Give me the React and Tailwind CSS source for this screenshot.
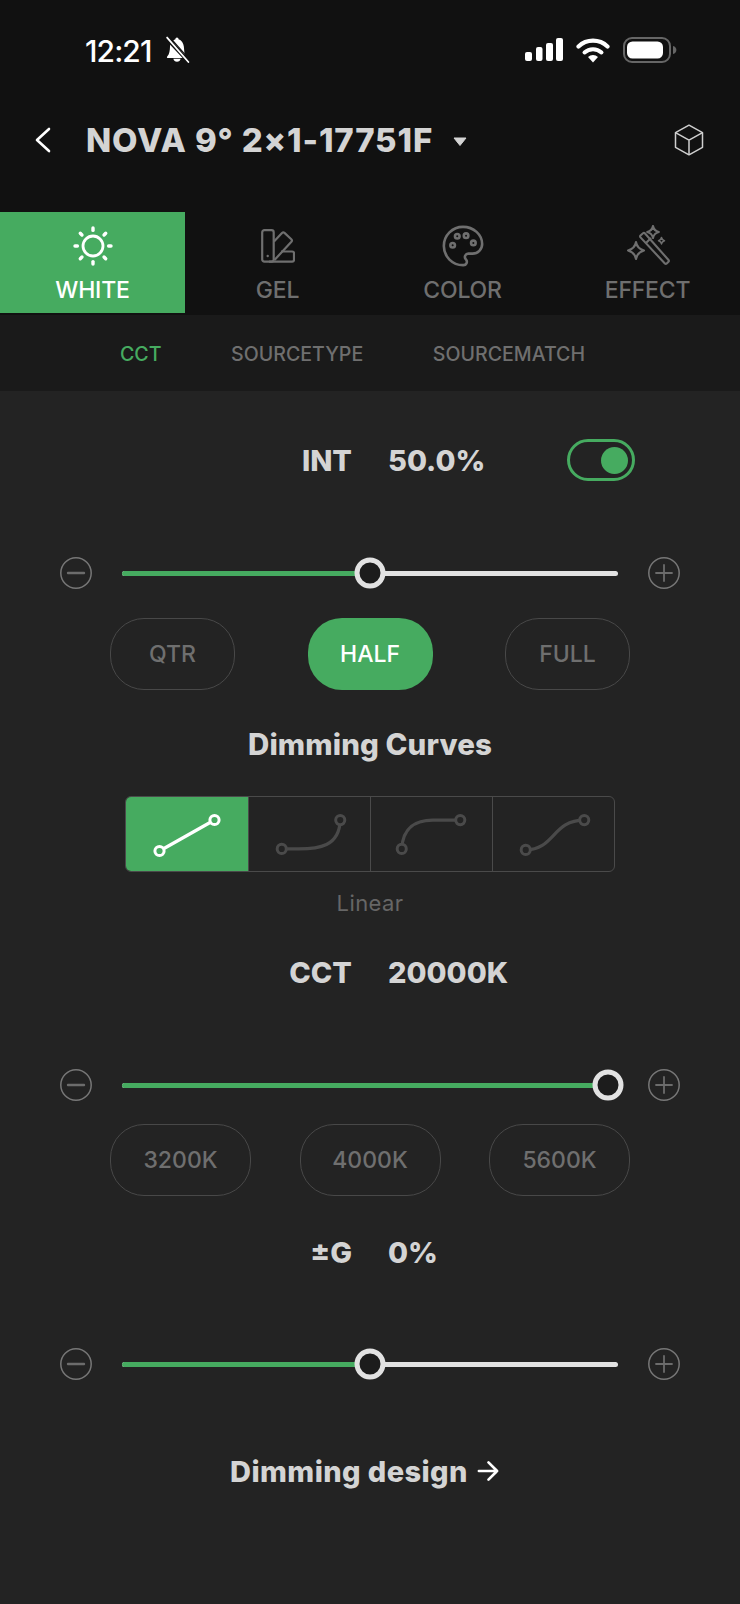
import React from "react";

const F = { fontFamily: "Inter, sans-serif" };

function BellSlash() {
  return (
    <svg width="27" height="27" viewBox="0 0 25 26" className="ml-[13px] mt-[-2px]">
      <path d="M12 1.500c-.9 0-1.500.7-1.500 1.600-1 .3-1.900.9-2.600 1.700L19.500 18c-.6-2.500-.6-5.300-.9-7.800-.3-3.300-2.200-6.200-5.100-7.100 0-.9-.6-1.600-1.500-1.600zM5.400 8.500c-.1.5-.1 1.200-.1 1.700-.2 3.800-.4 7.300-2.700 9.500-.6.6-.2 1.500.6 1.500h14.200z" fill="#fff" />
      <path d="M8.500 20.800a3.600 3.600 0 0 0 7 0z" fill="#fff" transform="translate(0 1.200)" />
      <path d="M2.500 1.500 23 25" stroke="#fff" strokeWidth="1.700" strokeLinecap="round" />
      <path d="M5 1 24 22.500" stroke="#111" strokeWidth="1.100" />
    </svg>
  );
}

function StatusIcons() {
  return (
    <div className="flex items-start">
      <svg width="38" height="24" viewBox="0 0 38 24">
        <rect x="0" y="14" width="7" height="9" rx="2" fill="#fff" />
        <rect x="11" y="9" width="6.500" height="14" rx="2" fill="#fff" />
        <rect x="21" y="5" width="7" height="18" rx="2" fill="#fff" />
        <rect x="31" y="0" width="7" height="23" rx="2" fill="#fff" />
      </svg>
      <svg width="34" height="26" viewBox="0 0 34 26" className="ml-[13px] mt-[-1px]">
        <path d="M2.500 9.500a21 21 0 0 1 29 0" fill="none" stroke="#fff" strokeWidth="4.200" strokeLinecap="round" />
        <path d="M8.500 15.500a12.500 12.500 0 0 1 17 0" fill="none" stroke="#fff" strokeWidth="4" strokeLinecap="round" />
        <path d="M17 25.500 12 20a7.400 7.400 0 0 1 10 0z" fill="#fff" />
      </svg>
      <svg width="54" height="26" viewBox="0 0 54 26" className="ml-[13px] mt-[-1px]">
        <rect x="1" y="1" width="46" height="24" rx="8" fill="none" stroke="#666" strokeWidth="2" />
        <rect x="4" y="4.500" width="36" height="17" rx="5.500" fill="#fff" />
        <path d="M50 9c2.200.5 3.400 2.200 3.400 4s-1.200 3.500-3.400 4z" fill="#666" />
      </svg>
    </div>
  );
}

function Sun() {
  const rays = [0, 45, 90, 135, 180, 225, 270, 315];
  return (
    <svg width="40" height="40" viewBox="0 0 40 40">
      <circle cx="20" cy="20" r="10" fill="none" stroke="#fff" strokeWidth="2.800" />
      {rays.map((a) => (
        <line key={a} x1="20" y1="2" x2="20" y2="4.400" stroke="#fff" strokeWidth="3.400" strokeLinecap="round" transform={`rotate(${a} 20 20)`} />
      ))}
    </svg>
  );
}

function Gel() {
  return (
    <svg width="34" height="34" viewBox="0 0 34 34" fill="none" stroke="#6f6f6f" strokeWidth="2.200" strokeLinejoin="round">
      <rect x="1.200" y="1.200" width="11.500" height="31.500" rx="2.200" />
      <circle cx="6.700" cy="27" r="1.200" fill="#6f6f6f" stroke="none" />
      <path d="M13 12.500 21 4c.8-.8 1.700-.8 2.500-.1l6.800 6.300c.8.8.8 1.700.1 2.500L13.500 31" />
      <path d="M20 22.500h11.300c1 0 1.700.7 1.700 1.700v6.600c0 1-.7 1.900-1.700 1.900H8" />
    </svg>
  );
}

function Palette() {
  return (
    <svg width="46" height="46" viewBox="0 0 24 24" fill="none" stroke="#6f6f6f" strokeWidth="1.350" strokeLinecap="round" strokeLinejoin="round">
      <path d="M12 22a1 1 0 0 1 0-20 10 9 0 0 1 10 9 5 5 0 0 1-5 5h-2.250a1.750 1.750 0 0 0-1.400 2.800l.3.4a1.750 1.750 0 0 1-1.400 2.800z" />
      <circle cx="13.600" cy="6.600" r="1.200" />
      <circle cx="17.400" cy="10.400" r="1.200" />
      <circle cx="6.600" cy="11.600" r="1.200" />
      <circle cx="9" cy="6.900" r="1.200" />
    </svg>
  );
}

function Wand() {
  return (
    <svg width="44" height="42" viewBox="0 0 44 42" fill="none" stroke="#6f6f6f" strokeWidth="2.100" strokeLinejoin="round">
      <path d="M14.500 10.500 17 8.200c.6-.5 1.300-.5 1.800 0L42.500 35c.5.6.5 1.200 0 1.700l-1.800 1.800c-.6.6-1.300.5-1.800 0L14.500 12.400c-.5-.6-.5-1.300 0-1.900z" />
      <path d="M20 18 25 13" />
      <path d="M10 17c.8 4.500 2.500 7 8 8.500-5.500 1.500-7.200 4-8 8.500-.8-4.500-2.500-7-8-8.500 5.500-1.500 7.200-4 8-8.500z" />
      <path d="M27 1c.6 3.200 2 5 5.800 6-3.800 1-5.200 2.800-5.800 6-.6-3.200-2-5-5.800-6 3.800-1 5.200-2.800 5.800-6z" />
      <path d="M35.500 12.500c.3 1.700 1 2.700 3 3.200-2 .5-2.700 1.500-3 3.200-.3-1.700-1-2.700-3-3.200 2-.5 2.700-1.500 3-3.200z" strokeWidth="1.500" />
    </svg>
  );
}

function Cube() {
  return (
    <svg width="30" height="32" viewBox="0 0 30 32" fill="none" stroke="#cfcfcf" strokeWidth="1.500" strokeLinejoin="round">
      <path d="M15 1.200 28.500 8.700v14.600L15 30.800 1.500 23.300V8.700z" />
      <path d="M1.500 8.700 15 16.200l13.500-7.500M15 16.200v14.600" />
    </svg>
  );
}

function Tab({ icon, label, active, iconBox }) {
  return (
    <div className={`flex flex-col items-center h-[101px] ${active ? "bg-[#46ab60]" : ""}`}>
      <div className="h-[63px] flex items-end justify-center">
        <div className={`${iconBox} flex items-center justify-center`}>{icon}</div>
      </div>
      <div className={`mt-[1px] text-[23px] leading-[28px] font-medium tracking-[-0.2px] ${active ? "text-white" : "text-[#6f6f6f]"}`}>{label}</div>
    </div>
  );
}

function Readout({ label, value, toggle }) {
  return (
    <div className="grid grid-cols-2 gap-x-[36px] h-[42px] items-center text-[#d4d4d4] text-[29px] font-extrabold leading-[42px]">
      <div className="text-right">{label}</div>
      <div className="flex items-center">
        <div className="w-[179px]">{value}</div>
        {toggle && (
          <div className="w-[68px] h-[42px] -translate-y-[1px] rounded-full border-[3px] border-[#46ab60] flex items-center justify-end pr-[4px]">
            <div className="w-[27px] h-[27px] rounded-full bg-[#46ab60]" />
          </div>
        )}
      </div>
    </div>
  );
}

function RoundBtn({ plus }) {
  return (
    <svg width="32" height="32" viewBox="0 0 32 32" fill="none" className="shrink-0">
      <circle cx="16" cy="16" r="15.200" stroke="#777" strokeWidth="1.500" />
      <line x1="8" y1="16" x2="24" y2="16" stroke="#6c6c6c" strokeWidth={plus ? 1.8 : 2.4} strokeLinecap="round" />
      {plus && <line x1="16" y1="8" x2="16" y2="24" stroke="#6c6c6c" strokeWidth="1.800" strokeLinecap="round" />}
    </svg>
  );
}

function Slider({ fill, knob }) {
  return (
    <div className="flex items-center pl-[60px]">
      <RoundBtn />
      <div className="relative ml-[30px] w-[496px] h-[5px] rounded-full bg-[#e2e2e2]">
        <div className={`h-full rounded-full bg-[#46ab60] ${fill}`} />
        <div className={`absolute top-1/2 -translate-x-1/2 -translate-y-1/2 w-[31px] h-[31px] rounded-full border-[5px] border-[#e2e2e2] bg-[#1c1c1c] ${knob}`} />
      </div>
      <div className="ml-[30px]">
        <RoundBtn plus />
      </div>
    </div>
  );
}

function Pill({ w, label, active }) {
  return (
    <div
      className={`${w} h-[72px] rounded-[34px] flex items-center justify-center text-[23px] font-medium ${
        active ? "bg-[#46ab60] text-white" : "border border-[#484848] text-[#6f6f6f]"
      }`}
    >
      {label}
    </div>
  );
}

function CurveIcon({ d, s, e, active }) {
  const c = active ? "#fff" : "#4a4a4a";
  const bg = active ? "#46ab60" : "#232323";
  return (
    <svg width="122" height="76" viewBox="0 0 122 76" fill="none">
      <path d={d} stroke={c} strokeWidth="3.200" strokeLinecap="round" />
      <circle cx={s[0]} cy={s[1]} r="4.600" stroke={c} strokeWidth="3" fill={bg} />
      <circle cx={e[0]} cy={e[1]} r="4.600" stroke={c} strokeWidth="3" fill={bg} />
    </svg>
  );
}

export default function App() {
  return (
    <div style={F} className="w-[740px] min-h-[1604px] bg-[#232323] flex flex-col">
      <div className="bg-[#111111] h-[315px] shrink-0">
        <div className="h-[100px] pt-[38px] pl-[85px] pr-[63px] flex justify-between items-start">
          <div className="flex items-start">
            <div className="text-white text-[30px] leading-[26px] font-medium tracking-[-0.9px]">12:21</div>
            <BellSlash />
          </div>
          <StatusIcons />
        </div>
        <div className="h-[80px] flex items-center pl-[34px] pr-[36px]">
          <svg width="17" height="26" viewBox="0 0 17 26" fill="none" stroke="#fff" strokeWidth="2.600" strokeLinecap="round" strokeLinejoin="round">
            <path d="M15 2 3 13l12 11" />
          </svg>
          <div className="ml-[35px] text-[#d4d4d4] text-[33px] font-extrabold leading-[40px] tracking-[0.85px] whitespace-nowrap">NOVA 9° 2×1-17751F</div>
          <svg width="14" height="9" viewBox="0 0 14 9" className="ml-[20px] mt-[2px]">
            <path d="M1 1h12L7 8.500z" fill="#d4d4d4" stroke="#d4d4d4" strokeLinejoin="round" />
          </svg>
          <div className="ml-auto">
            <Cube />
          </div>
        </div>
        <div className="mt-[32px] grid grid-cols-4">
          <Tab active icon={<Sun />} label="WHITE" iconBox="h-[40px] mb-[9px]" />
          <Tab icon={<Gel />} label="GEL" iconBox="h-[34px] mb-[12px]" />
          <Tab icon={<Palette />} label="COLOR" iconBox="h-[38px] mb-[10px]" />
          <Tab icon={<Wand />} label="EFFECT" iconBox="h-[42px] mb-[8px]" />
        </div>
      </div>

      <div className="h-[76px] bg-[#1a1a1a] flex items-center pl-[120px] pt-[3px] gap-[69.5px] text-[19.6px] font-medium text-[#6f6f6f]">
        <span className="text-[#46ab60]">CCT</span>
        <span>SOURCETYPE</span>
        <span>SOURCEMATCH</span>
      </div>

      <div className="mt-[49px]">
        <Readout label="INT" value="50.0%" toggle />
      </div>
      <div className="mt-[75px]">
        <Slider fill="w-[50%]" knob="left-[50%]" />
      </div>
      <div className="mt-[29px] flex justify-center gap-[72.5px]">
        <Pill w="w-[125px]" label="QTR" />
        <Pill w="w-[125px]" label="HALF" active />
        <Pill w="w-[125px]" label="FULL" />
      </div>
      <div className="mt-[36px] text-center text-[#d4d4d4] text-[29.5px] leading-[36px] font-extrabold tracking-[0.1px]">Dimming Curves</div>

      <div className="mt-[34px] mx-auto w-[490px] h-[76px] rounded-[6px] border border-[#4a4a4a] grid grid-cols-4 overflow-hidden">
        <div className="bg-[#46ab60] flex items-center justify-center">
          <CurveIcon active d="M33.500 54 88.500 23" s={[33.500, 54]} e={[88.500, 23]} />
        </div>
        <div className="border-l border-[#4a4a4a] flex items-center justify-center">
          <CurveIcon d="M33 52H50C70 52 91 50 92 23" s={[33, 52]} e={[92, 23]} />
        </div>
        <div className="border-l border-[#4a4a4a] flex items-center justify-center">
          <CurveIcon d="M31 52C32 30 46 23 62 23H90" s={[31, 52]} e={[90, 23]} />
        </div>
        <div className="border-l border-[#4a4a4a] flex items-center justify-center">
          <CurveIcon d="M33 53C62 53 60 23 92 23" s={[33, 53]} e={[92, 23]} />
        </div>
      </div>
      <div className="mt-[17px] text-center text-[#666666] text-[22px] leading-[28px] tracking-[0.4px]">Linear</div>

      <div className="mt-[35px]">
        <Readout label="CCT" value="20000K" />
      </div>
      <div className="mt-[75px]">
        <Slider fill="w-[98%]" knob="left-[98%]" />
      </div>
      <div className="mt-[23px] flex justify-center gap-[48.5px]">
        <Pill w="w-[141px]" label="3200K" />
        <Pill w="w-[141px]" label="4000K" />
        <Pill w="w-[141px]" label="5600K" />
      </div>

      <div className="mt-[36px]">
        <Readout label="±G" value="0%" />
      </div>
      <div className="mt-[74px]">
        <Slider fill="w-[50%]" knob="left-[50%]" />
      </div>

      <div className="mt-[74px] flex justify-center items-center h-[36px] pr-[11px]">
        <span className="text-[#d4d4d4] text-[29px] leading-[36px] font-extrabold tracking-[0.4px]">Dimming design</span>
        <svg width="22" height="22" viewBox="0 0 23 22" fill="none" stroke="#fff" strokeWidth="2.800" strokeLinecap="round" strokeLinejoin="round" className="ml-[9px] mb-[2px]">
          <path d="M2 11h19M12 2l9 9-9 9" />
        </svg>
      </div>
    </div>
  );
}
